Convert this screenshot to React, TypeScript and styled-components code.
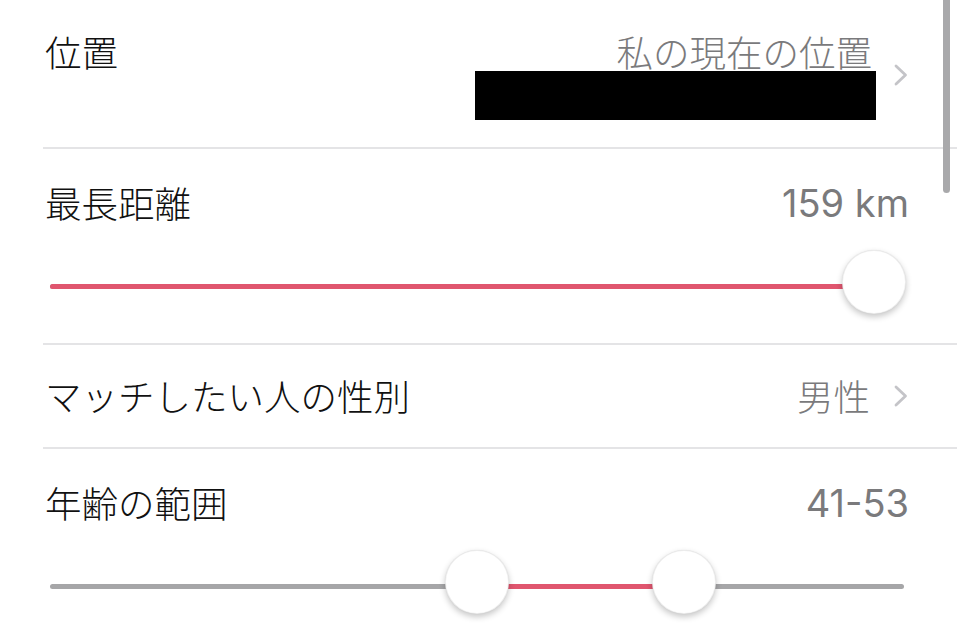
import React from "react";
import styled, { createGlobalStyle } from "styled-components";

const Global = createGlobalStyle`
  html, body { margin: 0; padding: 0; background: #fff; overflow: hidden; }
  body { font-family: "Noto Sans CJK JP", "Noto Sans", sans-serif; }
`;

const Page = styled.div`
  width: 957px;
  height: 637px;
  background: #fff;
  position: relative;
  overflow: hidden;
`;

const List = styled.div`
  margin-left: 43px;
  display: flex;
  flex-direction: column;
`;

const Row = styled.div<{ $pt: number; $pb: number }>`
  padding: ${(p) => p.$pt}px 48px ${(p) => p.$pb}px 2px;
  border-bottom: 2px solid #e4e4e6;
  display: flex;
  flex-direction: column;
`;

const Header = styled.div<{ $top?: boolean }>`
  display: flex;
  justify-content: space-between;
  align-items: ${(p) => (p.$top ? "flex-start" : "center")};
`;

const Label = styled.div`
  font-family: "Noto Sans CJK JP", sans-serif;
  font-weight: 300;
  font-size: 36.5px;
  line-height: 42px;
  color: #111;
`;

const Value = styled.div<{ $latin?: boolean }>`
  font-family: ${(p) =>
    p.$latin ? `Inter, "Noto Sans", sans-serif` : `"Noto Sans CJK JP", sans-serif`};
  font-weight: ${(p) => (p.$latin ? 400 : 300)};
  font-size: ${(p) => (p.$latin ? 38 : 36.5)}px;
  line-height: 42px;
  color: #7a7a7c;
  text-align: right;
`;

const ValueGroup = styled.div`
  display: flex;
  align-items: center;
`;

const ValueStack = styled.div`
  display: flex;
  flex-direction: column;
  align-items: flex-end;
  padding-top: 3px;
`;

const StackText = styled(Value)`
  line-height: 36px;
  padding-right: 4px;
`;

const Redaction = styled.div`
  width: 401px;
  height: 49px;
  margin-top: 1px;
  background: #000;
`;

const ChevronBox = styled.div<{ $lift?: number; $gap: number }>`
  margin-left: ${(p) => p.$gap}px;
  width: 16px;
  height: 22px;
  display: flex;
  margin-bottom: ${(p) => p.$lift ?? 0}px;
`;

const Chevron = ({ lift, gap }: { lift?: number; gap: number }) => (
  <ChevronBox $lift={lift} $gap={gap}>
    <svg width="16" height="22" viewBox="0 0 16 22">
      <path
        d="M3 2 L12.5 11 L3 20"
        fill="none"
        stroke="#c4c4c8"
        strokeWidth="2.8"
        strokeLinecap="round"
        strokeLinejoin="round"
      />
    </svg>
  </ChevronBox>
);

const SliderBox = styled.div`
  position: relative;
  height: 64px;
  margin: 26px 5px 0 5px;
`;

const Track = styled.div`
  position: absolute;
  left: 0;
  right: 0;
  top: 34px;
  height: 5px;
  border-radius: 3px;
  background: #a6a6a8;
`;

const Fill = styled.div`
  position: absolute;
  top: 0;
  bottom: 0;
  border-radius: 3px;
  background: #e0566f;
`;

const Rail = styled.div`
  position: absolute;
  left: 30px;
  right: 30px;
  top: 0;
  bottom: 0;
`;

const Thumb = styled.div`
  position: absolute;
  top: 0;
  width: 64px;
  height: 64px;
  margin-left: -32px;
  border-radius: 50%;
  background: #fff;
  box-sizing: border-box;
  border: 1px solid rgba(0, 0, 0, 0.07);
  box-shadow: 0 3px 6px rgba(0, 0, 0, 0.22), 0 0 1px rgba(0, 0, 0, 0.1);
`;

const Scrollbar = styled.div`
  position: absolute;
  right: 7px;
  top: -8px;
  width: 7px;
  height: 201px;
  border-radius: 4px;
  background: #a9a9ab;
`;

type SliderProps = { min: number; max: number; values: number[] };

const Slider = ({ min, max, values }: SliderProps) => {
  const pcts = values.map((v) => ((v - min) / (max - min)) * 100);
  const single = pcts.length === 1;
  const from = single ? 0 : pcts[0];
  const to = single ? pcts[0] : pcts[1];
  return (
    <SliderBox>
      <Track>
        <Fill
          style={{
            left: single ? "0px" : `calc(30px + (100% - 60px) * ${from / 100})`,
            width: single
              ? `calc(30px + (100% - 60px) * ${to / 100})`
              : `calc((100% - 60px) * ${(to - from) / 100})`,
          }}
        />
      </Track>
      <Rail>
        {pcts.map((p, i) => (
          <Thumb key={i} style={{ left: `${p}%` }} />
        ))}
      </Rail>
    </SliderBox>
  );
};

export default function App() {
  return (
    <Page>
      <Global />
      <List>
        <Row $pt={31} $pb={27}>
          <Header $top>
            <Label>位置</Label>
            <ValueGroup>
              <ValueStack>
                <StackText>私の現在の位置</StackText>
                <Redaction />
              </ValueStack>
              <Chevron lift={2} gap={17} />
            </ValueGroup>
          </Header>
        </Row>
        <Row $pt={33} $pb={29}>
          <Header>
            <Label>最長距離</Label>
            <Value $latin>159 km</Value>
          </Header>
          <Slider min={2} max={159} values={[159]} />
        </Row>
        <Row $pt={30} $pb={30}>
          <Header>
            <Label>マッチしたい人の性別</Label>
            <ValueGroup>
              <Value>男性</Value>
              <Chevron gap={23} />
            </ValueGroup>
          </Header>
        </Row>
        <Row $pt={33} $pb={40}>
          <Header>
            <Label>年齢の範囲</Label>
            <Value $latin>41-53</Value>
          </Header>
          <Slider min={18} max={64} values={[41, 53]} />
        </Row>
      </List>
      <Scrollbar />
    </Page>
  );
}
